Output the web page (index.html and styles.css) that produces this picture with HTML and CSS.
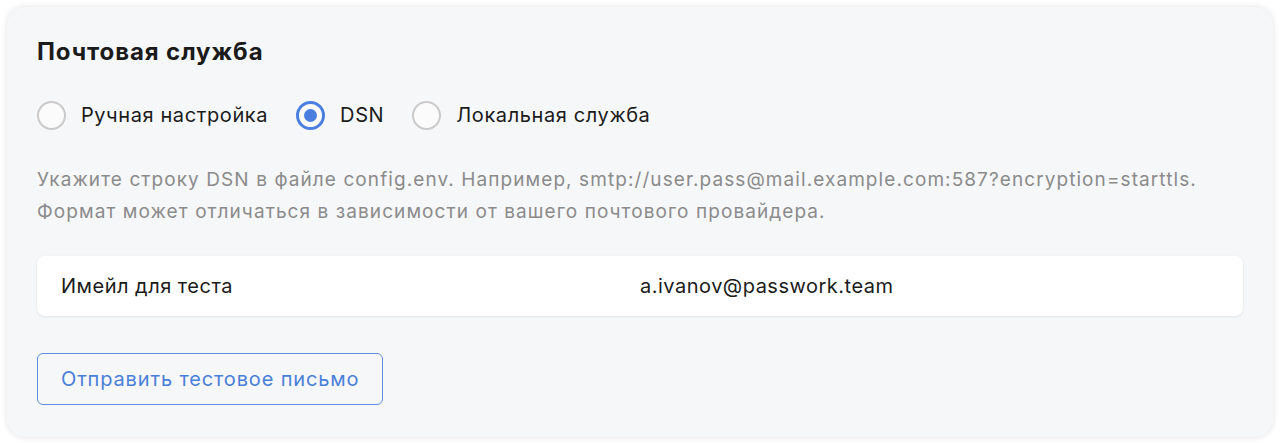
FILE: index.html
```html
<!DOCTYPE html>
<html lang="ru">
<head>
<meta charset="utf-8">
<link rel="stylesheet" href="styles.css">
</head>
<body>
<section class="card">
  <h2 class="title">Почтовая служба</h2>
  <div class="radios">
    <label class="radio"><span class="dot"></span><span>Ручная настройка</span></label>
    <label class="radio checked"><span class="dot"></span><span>DSN</span></label>
    <label class="radio"><span class="dot"></span><span>Локальная служба</span></label>
  </div>
  <p class="hint">Укажите строку DSN в файле config.env. Например, smtp://user.pass@mail.example.com:587?encryption=starttls.<br>Формат может отличаться в зависимости от вашего почтового провайдера.</p>
  <div class="row">
    <span class="row-label">Имейл для теста</span>
    <span class="row-value">a.ivanov@passwork.team</span>
  </div>
  <button class="btn">Отправить тестовое письмо</button>
</section>
</body>
</html>
```
FILE: styles.css
```css
* { box-sizing: border-box; }
html, body { margin: 0; background: #ffffff; }
body {
  padding: 7px;
  font-family: Inter, "Noto Sans", sans-serif;
  color: #1b1b1b;
}
.card {
  background: #f6f7f9;
  border-radius: 18px;
  box-shadow: 0 0 6px rgba(0,0,0,0.12);
  padding: 30px 30px 31px 30px;
  height: 430px;
}
.title {
  margin: 0;
  font-size: 24px;
  font-weight: 700;
  letter-spacing: 0.9px;
  line-height: 30px;
}
.radios {
  display: flex;
  align-items: center;
  margin-top: 33px;
  height: 30px;
}
.radio {
  display: flex;
  align-items: center;
  gap: 15px;
  font-size: 20px;
  letter-spacing: 0.6px;
  margin-right: 28px;
}
.dot {
  width: 29px;
  height: 29px;
  border-radius: 50%;
  border: 2px solid #cacaca;
  background: #fbfbfc;
  display: flex;
  align-items: center;
  justify-content: center;
}
.checked .dot {
  border: 3px solid #4a7fe0;
}
.checked .dot::after {
  content: "";
  width: 13px;
  height: 13px;
  border-radius: 50%;
  background: #4a7fe0;
}
.hint {
  margin: 34px 0 0 0;
  font-size: 19px;
  letter-spacing: 1.08px;
  line-height: 32px;
  color: #8b8b8b;
}
.row {
  margin-top: 28px;
  background: #ffffff;
  border-radius: 8px;
  box-shadow: 0 1px 3px rgba(0,0,0,0.08);
  height: 60px;
  display: grid;
  grid-template-columns: 579px 1fr;
  align-items: center;
  padding: 0 24px;
  font-size: 20px;
  letter-spacing: 0.5px;
}
.btn {
  margin-top: 37px;
  height: 52px;
  width: 346px;
  padding: 0 20px 0 23px;
  text-align: left;
  white-space: nowrap;
  border: 1px solid #5d8ee0;
  border-radius: 6px;
  background: transparent;
  color: #4a7fd8;
  font-family: inherit;
  font-size: 20px;
  letter-spacing: 0.85px;
}
```
